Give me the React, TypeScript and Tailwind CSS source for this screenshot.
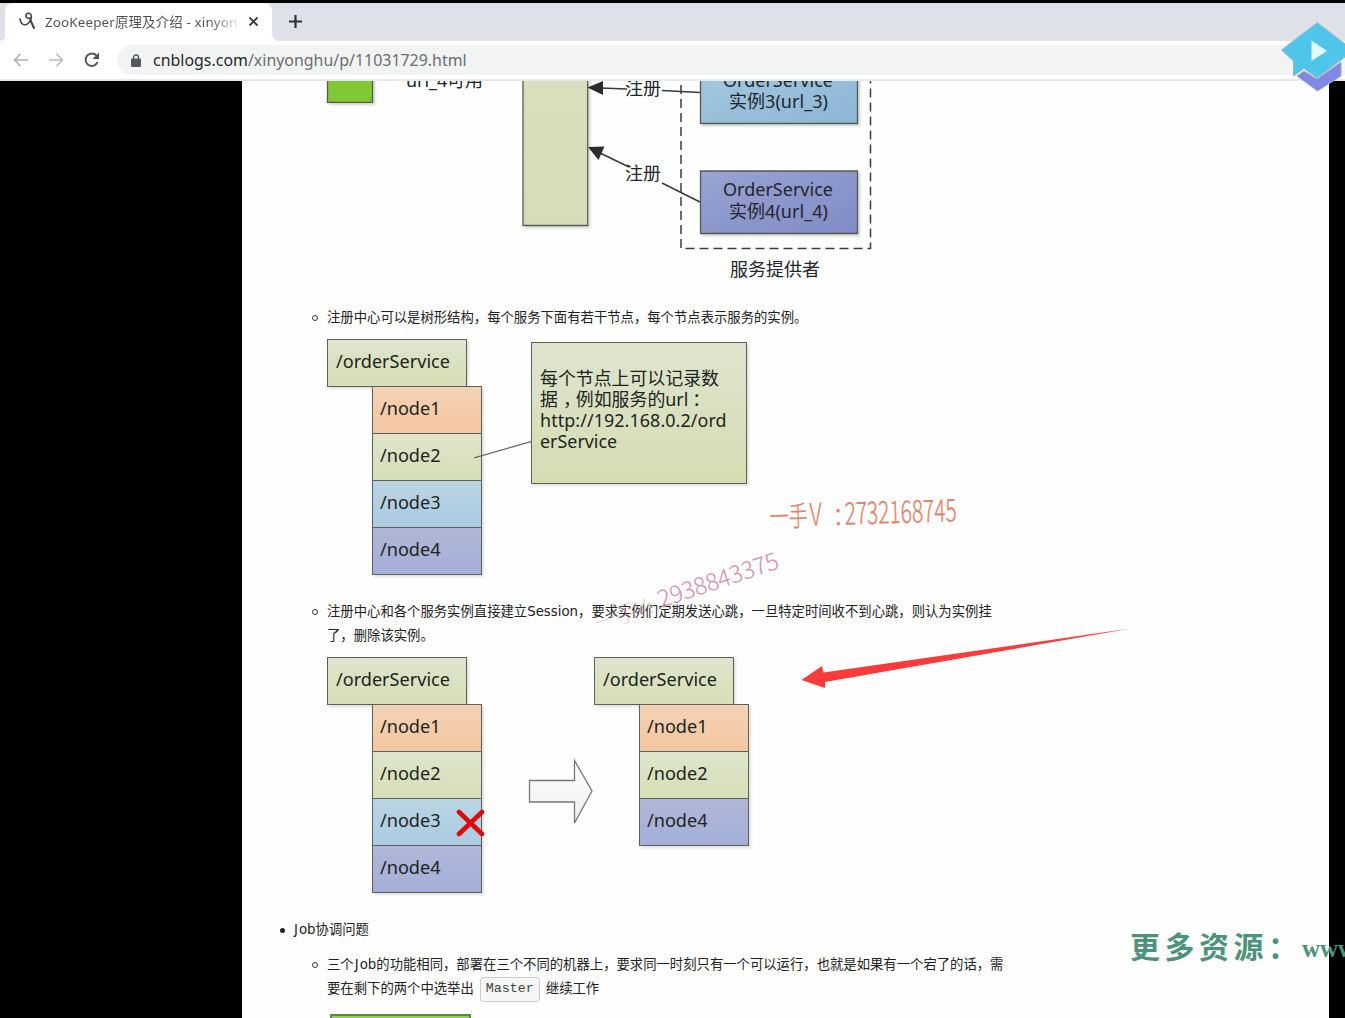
import React from "react";

const NOTO = "font-['Noto_Sans','Noto_Sans_CJK_SC',sans-serif]";

const tones = {
  green: "bg-linear-to-b from-[#dfe4cd] to-[#d6dfb5]",
  orange: "bg-linear-to-b from-[#f4d3b6] to-[#f3c6a0]",
  blue: "bg-linear-to-b from-[#bad4e2] to-[#abcbe3]",
  violet: "bg-linear-to-b from-[#afb8d7] to-[#a5aed8]",
};

type Tone = keyof typeof tones;
type TreeNode = { name: string; tone: Tone; removed?: boolean };

const NODES: TreeNode[] = [
  { name: "/node1", tone: "orange" },
  { name: "/node2", tone: "green" },
  { name: "/node3", tone: "blue" },
  { name: "/node4", tone: "violet" },
];

function Tree({ nodes }: { nodes: TreeNode[] }) {
  return (
    <div className={`w-[156px] shrink-0 text-[18.1px] leading-[42px] text-[#20241c] ${NOTO}`}>
      <div className={`h-12 w-[140px] border border-[#5d6058] pl-2 shadow-[2px_2px_2px_#dfe3dc] ${tones.green}`}>/orderService</div>
      <div className="-mt-px ml-[45px] w-[110px] shadow-[2px_2px_2px_#dfe3dc]">
        {nodes.map((n, i) => (
          <div key={n.name} className={`relative h-12 border border-[#5d6058] pl-[7px] ${i ? "-mt-px" : ""} ${tones[n.tone]}`}>
            {n.name}
            {n.removed && (
              <svg className="absolute top-2.5 left-[83px]" width="30" height="29" viewBox="0 0 30 29">
                <path d="M3 3 26 25M26 3 3 25" stroke="#dc0b0b" strokeWidth="4.6" strokeLinecap="round" />
              </svg>
            )}
          </div>
        ))}
      </div>
    </div>
  );
}

function Item({ children }: { children: React.ReactNode }) {
  return (
    <div className="flex">
      <span className="mt-[9px] mr-[9px] ml-[70px] size-[6px] shrink-0 rounded-full border border-[#333]" />
      <div className="whitespace-nowrap">{children}</div>
    </div>
  );
}

function Job() {
  return (
    <>
      <span className="mr-[1px] ml-[1px]">J</span>ob
    </>
  );
}

function RegistryDiagram() {
  return (
    <svg className="block shrink-0" width="1087" height="215" viewBox="242 81 1087 215" fontSize="18" fill="#22262b">
      <defs>
        <linearGradient id="pale" x2="0" y2="1">
          <stop stopColor="#dae0bd" />
          <stop offset="1" stopColor="#d4dcb8" />
        </linearGradient>
        <linearGradient id="sky" x2="1" y2="1">
          <stop stopColor="#a4cbdf" />
          <stop offset="1" stopColor="#8db5d6" />
        </linearGradient>
        <linearGradient id="indigo" x2="1" y2="1">
          <stop stopColor="#98a4d2" />
          <stop offset="1" stopColor="#7f8bc5" />
        </linearGradient>
        <filter id="drop">
          <feDropShadow dx="2" dy="2" stdDeviation="1" floodColor="#cfd5cb" />
        </filter>
      </defs>
      <g className={NOTO}>
        <g stroke="#555952" strokeWidth="1.3" filter="url(#drop)">
          <path d="M327.5 70h45v32.300h-45z" fill="#80c935" />
          <path d="M523 60h64.700v165.500H523z" fill="url(#pale)" />
          <path d="M700.500 60h157v63.500h-157z" fill="url(#sky)" />
          <path d="M700.500 171h157v62.500h-157z" fill="url(#indigo)" />
        </g>
        <path d="M681 60V248.500H870.500V60" fill="none" stroke="#3c3c3c" strokeWidth="1.5" strokeDasharray="9 5" strokeDashoffset="3" />
        <path d="M600 88 627 89M662 90.500 700 92.500M600 153 629 167M662 183 700 202" stroke="#3a3a3a" strokeWidth="1.6" />
        <path d="M587.500 87.500 603 81V95ZM588 147 604.500 146.500 598.500 160Z" fill="#2c2c2c" />
        <text x="406" y="87" textLength="77">url_4可用</text>
        <text x="625" y="94.500">注册</text>
        <text x="625" y="179.500">注册</text>
        <text x="723" y="87" textLength="110">OrderService</text>
        <text x="729" y="107.500" textLength="99">实例3(url_3)</text>
        <text x="723" y="196" textLength="110">OrderService</text>
        <text x="729" y="217.500" textLength="99">实例4(url_4)</text>
        <text x="730" y="276" textLength="90">服务提供者</text>
      </g>
    </svg>
  );
}

function Browser() {
  return (
    <header className={`shrink-0 border-t-[3px] border-black ${NOTO}`}>
      <div className="flex h-[38px] bg-[#dee1e8]">
        <div className="flex w-[5px] items-end bg-white"><div className="h-full w-full rounded-br-[8px] bg-[#dee1e8]" /></div>
        <div className="flex w-[267px] items-center rounded-t-[8px] bg-white pl-[14px]">
          <svg className="-mt-[2px]" width="17" height="18" viewBox="0 0 51 54" fill="none" stroke="#3c4043" strokeWidth="4.500" strokeLinecap="round">
            <path d="M3 20C4 33 11 40 20 38 31 36 38 23 37 12 36 3 27 1 22 7 18 14 25 21 33 18" />
            <path d="M34 24 45 48" strokeWidth="6" />
          </svg>
          <div className="ml-[9px] w-[193px] overflow-hidden bg-linear-to-r from-[#4b4f54] from-85% to-[#e8e8e8] bg-clip-text text-[13.4px] leading-[22px] tracking-[0.16px] whitespace-nowrap text-transparent">ZooKeeper原理及介绍 - xinyon</div>
          <svg className="-mt-[2px] ml-[10px]" width="11" height="11" viewBox="0 0 11 11"><path d="m1.500 1.500 8 8m0-8-8 8" stroke="#34373b" strokeWidth="1.800" /></svg>
        </div>
        <div className="flex w-[9px] bg-white"><div className="h-full w-full rounded-bl-[8px] bg-[#dee1e8]" /></div>
        <svg className="mt-[11px] ml-[7px]" width="15" height="15" viewBox="0 0 15 15"><path d="M7.500 1v13M1 7.500h13" stroke="#303338" strokeWidth="2.200" /></svg>
      </div>
      <div className="flex h-[40px] items-center border-b-2 border-[#e9e9e9] bg-white pl-[13px]">
        <svg width="15" height="14" viewBox="0 0 15 14" fill="none" stroke="#aeb0b3" strokeWidth="1.600"><path d="M15 7H1.500M7.500 1l-6 6 6 6" /></svg>
        <svg className="ml-[21px]" width="15" height="14" viewBox="0 0 15 14" fill="none" stroke="#b9bbbe" strokeWidth="1.600"><path d="M0 7h13.500M7.500 1l6 6-6 6" /></svg>
        <svg className="ml-[19px]" width="18" height="18" viewBox="0 0 18 18"><path d="M14.500 11.200A6.200 6.200 0 1 1 13.500 4.700" fill="none" stroke="#505459" strokeWidth="1.900" /><path d="M16 1.500V8H9.500Z" fill="#505459" /></svg>
        <div className="ml-[16px] flex h-[30px] flex-1 items-center rounded-l-full bg-[#f2f4f4] pl-[14px]">
          <svg width="10" height="13" viewBox="0 0 10 13"><path d="M2.500 6V3.500a2.500 2.500 0 0 1 5 0V6" fill="none" stroke="#55585d" strokeWidth="1.400" /><rect y="4.500" width="10" height="8.500" rx="1" fill="#55585d" /></svg>
          <span className="mt-[2px] ml-[12px] text-[15.900px] tracking-[0.02px] text-[#696d72]"><span className="text-[#26282b]">cnblogs.com</span>/xinyonghu/p/11031729.html</span>
        </div>
      </div>
    </header>
  );
}

export default function App() {
  return (
    <div className="relative flex h-[1018px] w-[1345px] flex-col overflow-hidden bg-black">
      <Browser />
      <main className="mr-[16px] ml-[242px] flex h-[937px] flex-col overflow-hidden bg-[#fefefe] font-['DejaVu_Sans','Noto_Sans_CJK_SC',sans-serif] text-[13.350px] leading-6 text-[#222]">
        <RegistryDiagram />
        <div className="mt-[10px]"><Item>注册中心可以是树形结构，每个服务下面有若干节点，每个节点表示服务的实例。</Item></div>
        <div className="mt-[9px] ml-[85px] flex h-[236px]">
          <Tree nodes={NODES} />
          <svg className="z-10 mt-[98px] -ml-[9px]" width="57" height="24" viewBox="0 0 57 24"><path d="M0 21 57 4.500" stroke="#656565" strokeWidth="1.300" /></svg>
          <div className={`mt-[3px] h-[142px] w-[216px] border border-[#5d6058] bg-linear-to-b from-[#dfe4cf] to-[#d4ddb1] pt-[25px] pl-2 text-[17.900px] leading-[21px] whitespace-nowrap text-[#20241c] shadow-[2px_2px_2px_#dfe3dc] ${NOTO}`}>
            每个节点上可以记录数<br />据<span className="inline-block translate-x-[5px]">，</span>例如服务的url<span className="inline-block translate-x-[4px]">：</span><br />
            <span className="tracking-[0.08px]">http://192.168.0.2/ord</span><br />erService
          </div>
        </div>
        <div className="mt-[25px]">
          <Item>注册中心和各个服务实例直接建立Session，要求实例们定期发送心跳，一旦特定时间收不到心跳，则认为实例挂<br />了，删除该实例。</Item>
        </div>
        <div className="mt-[9px] ml-[85px] flex h-[236px]">
          <Tree nodes={NODES.map((n) => ({ ...n, removed: n.name === "/node3" }))} />
          <svg className="mt-[100px] ml-[45px]" width="66" height="68" viewBox="0 0 66 68">
            <defs><linearGradient id="arrow" x2="0" y2="1"><stop stopColor="#fff" /><stop offset="1" stopColor="#efefef" /></linearGradient></defs>
            <path d="M1.500 23.500H46.500V3.500L64 34 46.500 66V45H1.500Z" fill="url(#arrow)" stroke="#777" strokeWidth="1.300" />
          </svg>
          <Tree nodes={NODES.filter((n) => n.name !== "/node3")} />
        </div>
        <div className="mt-[25px] flex items-center"><span className="mr-[8px] ml-[38px] size-[5px] rounded-full bg-[#222]" /><span><Job />协调问题</span></div>
        <div className="mt-[11px]">
          <Item>
            三个<Job />的功能相同，部署在三个不同的机器上，要求同一时刻只有一个可以运行，也就是如果有一个宕了的话，需
            <div className="flex h-6 items-center">
              要在剩下的两个中选举出
              <code className="mx-[6px] flex h-[25px] items-center rounded-[3px] border border-[#ccc] bg-[#f6f6f6] px-[5px] font-['Liberation_Mono',monospace] text-[13.333px] text-[#444]">Master</code>
              继续工作
            </div>
          </Item>
        </div>
        <div className="mt-[13px] ml-[88px] h-12 w-[141px] shrink-0 border-2 border-[#5f8a3c] bg-[#92cf58]" />
      </main>

      {/* Overlays floating above the page: watermarks, pointer arrow, player logo */}
      <svg className="pointer-events-none absolute inset-0" width="1345" height="1018" viewBox="0 0 1345 1018">
        <path d="M801.500 680 822 666 823.500 672.500 1132 628.300 825 682 825 688Z" fill="#fb3b3b" />
        <g className="font-['Noto_Sans_CJK_SC',sans-serif] font-light">
          <g fill="#dc8368" stroke="#dc8368" strokeWidth=".3" transform="translate(770 527) rotate(-1.800)">
            <text fontSize="28" y="0" textLength="38" lengthAdjust="spacingAndGlyphs">一手</text>
            <text fontSize="31" x="40" textLength="12" lengthAdjust="spacingAndGlyphs">V</text>
            <text fontSize="31" x="65" textLength="7" lengthAdjust="spacingAndGlyphs">:</text>
            <text fontSize="31" x="75" textLength="112" lengthAdjust="spacingAndGlyphs">2732168745</text>
          </g>
          <g fill="#cf8fae" transform="translate(661 608) rotate(-18.500)">
            <text fontSize="24" textLength="126">2938843375</text>
            <text fontSize="22" x="-67" y="2" opacity=".45" textLength="60" lengthAdjust="spacingAndGlyphs">一手V:</text>
          </g>
        </g>
        <g fill="#4d927a" fontWeight="700">
          <text x="1130" y="958" fontSize="30" letterSpacing="4.500" className="font-['Noto_Sans_CJK_SC',sans-serif]">更多资源：</text>
          <text x="1302" y="957" fontSize="25" className="font-['Liberation_Serif',serif]">www</text>
        </g>
        <path d="M1297 76 1304 71 1317 79 1341 62V76L1317.500 91Z" fill="#7f88e5" stroke="#a8adba" />
        <path d="M1317.300 22.700 1281.500 50 1293.500 61V76L1304 68.500 1317 78 1349 54V47Z" fill="#50c5ec" stroke="#95b8c5" />
        <path d="M1311.500 40.500 1327 51 1311.500 61Z" fill="#e2faff" />
      </svg>
    </div>
  );
}
